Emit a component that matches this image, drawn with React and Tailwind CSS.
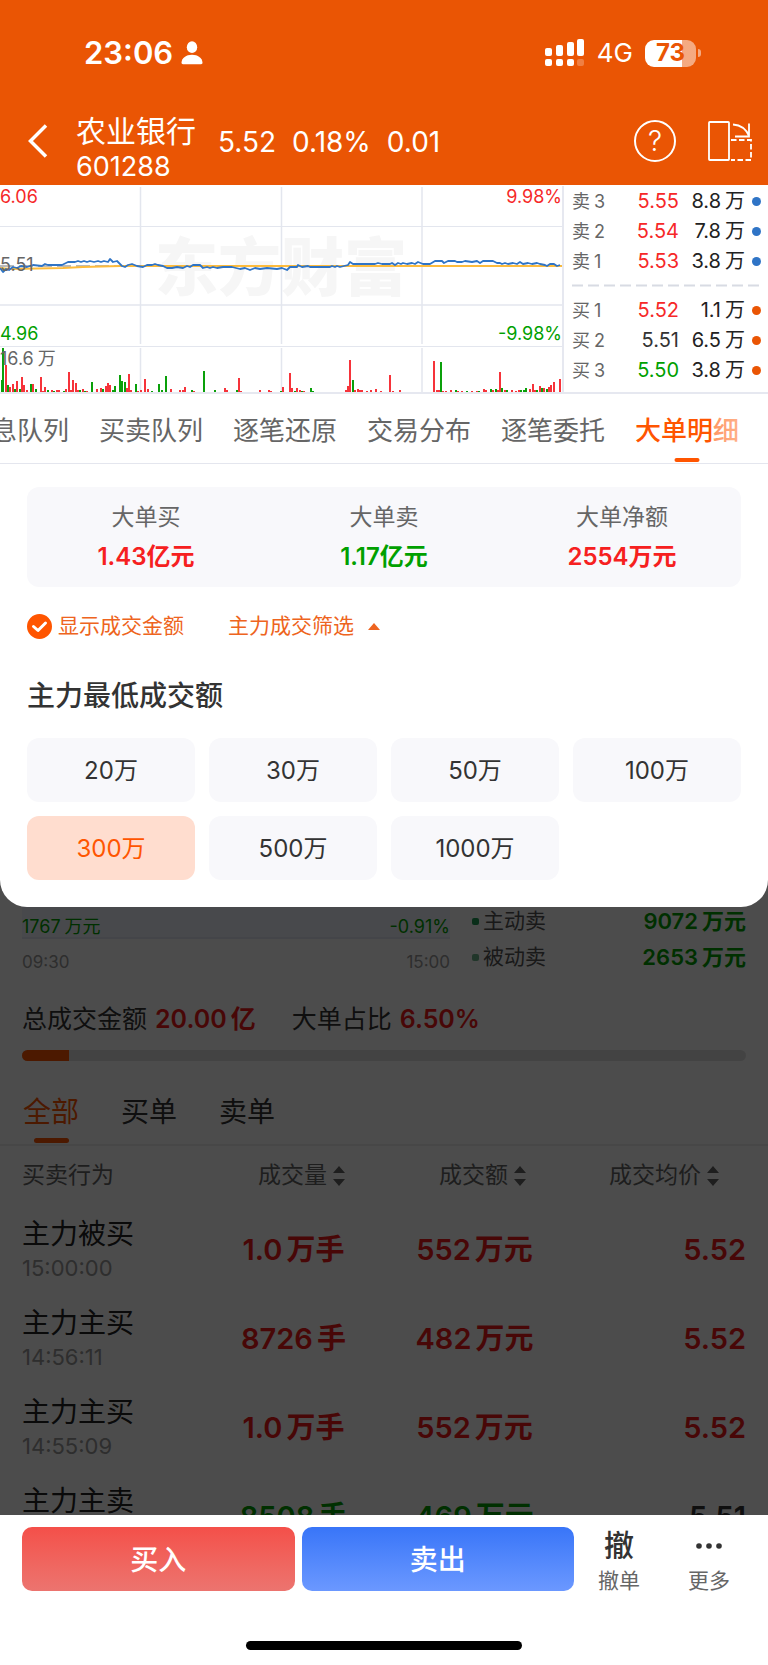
import React, { useState } from 'react';

const sellOrders = [
  { side: '卖', level: 3, price: '5.55', amount: '8.8', color: 'text-[#f62828]' },
  { side: '卖', level: 2, price: '5.54', amount: '7.8', color: 'text-[#f62828]' },
  { side: '卖', level: 1, price: '5.53', amount: '3.8', color: 'text-[#f62828]' },
];

const buyOrders = [
  { side: '买', level: 1, price: '5.52', amount: '1.1', color: 'text-[#f62828]' },
  { side: '买', level: 2, price: '5.51', amount: '6.5', color: 'text-[#333333]' },
  { side: '买', level: 3, price: '5.50', amount: '3.8', color: 'text-[#00a000]' },
];

const tabs = ['息队列', '买卖队列', '逐笔还原', '交易分布', '逐笔委托', '大单明细'];
const amounts = ['20万', '30万', '50万', '100万', '300万', '500万', '1000万'];

const summary = [
  { label: '大单买', value: '1.43亿元', color: 'text-[#f62020]' },
  { label: '大单卖', value: '1.17亿元', color: 'text-[#00a000]' },
  { label: '大单净额', value: '2554万元', color: 'text-[#f62020]' },
];

const trades = [
  { name: '主力被买', time: '15:00:00', vol: '1.0', volUnit: '万手', amt: '552', price: '5.52', color: 'text-[#f01818]', priceColor: 'text-[#f01818]' },
  { name: '主力主买', time: '14:56:11', vol: '8726', volUnit: '手', amt: '482', price: '5.52', color: 'text-[#f01818]', priceColor: 'text-[#f01818]' },
  { name: '主力主买', time: '14:55:09', vol: '1.0', volUnit: '万手', amt: '552', price: '5.52', color: 'text-[#f01818]', priceColor: 'text-[#f01818]' },
  { name: '主力主卖', time: '14:53:27', vol: '8508', volUnit: '手', amt: '469', price: '5.51', color: 'text-[#00a000]', priceColor: 'text-[#333333]' },
];

const priceLine =
  '0,82 3,86 6,83 9,84 13,81 17,82 21,80 27,81 33,79 42,80 45,78 48,79 62,79 68,76 75,76 78,75 81,76 84,75 87,76 90,75 94,76 98,75 101,76 104,75 108,76 110,73 113,76 117,75 122,80 125,81 128,79 132,78 137,80 143,81 147,79 152,79 155,78 158,79 163,80 167,82 172,82 177,81 183,82 187,80 190,81 193,79 200,79 203,82 207,81 210,82 213,81 217,82 223,81 232,81 240,83 245,82 250,84 255,82 260,83 267,82 277,83 282,82 287,84 290,81 297,81 298,79 302,81 308,80 310,81 330,81 332,80 335,81 337,80 340,81 348,79 350,76 353,78 375,78 378,77 382,78 390,78 392,77 395,79 398,77 401,78 403,77 407,78 412,77 415,78 418,76 423,78 430,78 435,75 442,75 444,77 448,75 455,75 457,76 462,76 465,75 472,76 477,75 480,77 483,75 493,75 497,77 500,77 502,78 505,77 508,78 513,77 517,78 520,76 523,78 528,77 532,78 537,77 540,78 545,79 547,80 550,78 554,78 557,80 560,79';

// [x, height, up?]
const volume = [
  [2, 12, 0], [3, 44, 0], [6, 27, 1], [8, 7, 0], [10, 5, 1], [13, 8, 1], [15, 3, 0], [17, 11, 1], [20, 3, 0], [22, 15, 1],
  [24, 7, 1], [27, 2, 1], [31, 8, 0], [33, 8, 1], [36, 3, 0], [41, 15, 1], [43, 1, 1], [45, 5, 1], [48, 2, 0], [52, 2, 1],
  [54, 1, 0], [57, 2, 1], [59, 2, 1], [64, 1, 0], [66, 3, 1], [69, 20, 1], [71, 2, 1], [73, 12, 1], [76, 9, 1], [78, 2, 1],
  [80, 2, 0], [83, 3, 1], [85, 1, 0], [87, 1, 1], [92, 10, 0], [97, 3, 1], [101, 4, 1], [103, 3, 0], [106, 6, 1], [108, 9, 1],
  [110, 7, 1], [113, 2, 0], [115, 6, 0], [120, 17, 0], [122, 11, 0], [125, 10, 0], [127, 4, 1], [129, 18, 1], [131, 2, 1], [136, 8, 0],
  [138, 1, 1], [141, 2, 1], [145, 13, 1], [148, 3, 1], [152, 1, 0], [159, 8, 0], [162, 2, 0], [166, 16, 0], [171, 3, 1], [180, 2, 1],
  [183, 2, 1], [185, 5, 1], [192, 2, 0], [194, 1, 1], [204, 21, 0], [215, 2, 0], [225, 4, 1], [227, 2, 1], [237, 2, 0], [239, 14, 1],
  [241, 1, 1], [260, 2, 1], [269, 2, 1], [271, 1, 1], [281, 1, 0], [283, 5, 1], [290, 19, 1], [292, 4, 1], [295, 1, 0], [297, 4, 1],
  [300, 2, 1], [302, 1, 0], [304, 1, 1], [311, 4, 0], [313, 1, 0], [346, 2, 1], [348, 6, 1], [350, 32, 1], [353, 12, 0], [355, 2, 1],
  [358, 3, 1], [360, 2, 1], [362, 2, 1], [367, 1, 1], [371, 2, 1], [376, 3, 1], [381, 1, 1], [390, 17, 1], [393, 1, 1], [400, 2, 1],
  [434, 31, 1], [437, 2, 1], [439, 2, 1], [441, 30, 0], [443, 1, 1], [446, 1, 1], [451, 2, 1], [456, 2, 0], [458, 1, 1], [462, 1, 1],
  [467, 1, 0], [472, 1, 1], [477, 1, 1], [479, 1, 0], [484, 3, 1], [486, 2, 1], [491, 3, 0], [493, 2, 1], [496, 3, 0], [498, 2, 1],
  [500, 20, 1], [502, 4, 0], [505, 2, 1], [507, 2, 0], [512, 2, 1], [516, 1, 1], [519, 2, 1], [521, 2, 0], [524, 2, 0], [526, 4, 0],
  [530, 3, 1], [533, 8, 1], [535, 2, 1], [537, 2, 0], [540, 6, 1], [542, 4, 0], [544, 4, 1], [547, 3, 0], [549, 5, 1], [551, 7, 1],
  [554, 10, 1], [560, 13, 1],
];

// number followed by its unit, with a narrow gap between them
const Amount = ({ value, unit }) => (
  <>
    {value}
    <span className="ml-1">{unit}</span>
  </>
);

const StatusBar = () => (
  <div className="flex h-8 items-center justify-between pl-[84px] pr-[67px]">
    <div className="flex items-center gap-2">
      <span className="text-[31px] leading-8 font-semibold">23:06</span>
      <svg width="22" height="24" viewBox="0 0 22 24" fill="currentColor">
        <ellipse cx="11" cy="6.2" rx="5.2" ry="5.9" />
        <path d="M0.5 21.5C1 17 5 13.8 11 13.8S21 17 21.5 21.5C21.5 22.7 21 23.2 20 23.2H2C1 23.2 0.5 22.7 0.5 21.5Z" />
      </svg>
    </div>
    <div className="flex items-center">
      <svg width="40" height="28" viewBox="0 0 40 28" fill="currentColor">
        <rect x="0" y="9" width="7" height="8" rx="2" />
        <rect x="11" y="6" width="7" height="11" rx="2" />
        <rect x="22" y="3" width="7" height="14" rx="2" />
        <rect x="32" y="0" width="7" height="17" rx="2" />
        <rect x="0" y="20" width="7" height="7" rx="2" />
        <rect x="11" y="20" width="7" height="7" rx="2" />
        <rect x="22" y="20" width="7" height="7" rx="2" />
        <rect x="32" y="20" width="7" height="7" rx="2" opacity="0.25" />
      </svg>
      <span className="ml-3 text-[26px] leading-8">4G</span>
      <span className="ml-3 flex h-[27px] w-[51px] items-center justify-center rounded-[9px] bg-linear-to-r from-white from-73% to-white/50 to-73% text-[24px] leading-none font-bold text-[#ea5504]">
        73
      </span>
      <span className="ml-[2px] h-2 w-[3px] rounded-r-full bg-white/50"></span>
    </div>
  </div>
);

const NavBar = () => (
  <div className="mt-7 flex h-[88px] items-center pr-4 pl-7">
    <button type="button" aria-label="返回">
      <svg width="20" height="34" viewBox="0 0 20 34" fill="none" stroke="currentColor" strokeWidth="3.5">
        <path d="M18 1.5L2.5 17L18 32.5" />
      </svg>
    </button>
    <div className="ml-7 self-end">
      <h1 className="text-[30px] leading-9">农业银行</h1>
      <p className="text-[27px] leading-9">601288</p>
    </div>
    <div className="ml-[22px] flex flex-1 gap-4 pt-[2px] text-[28px] leading-9">
      <span>5.52</span>
      <span>0.18%</span>
      <span>0.01</span>
    </div>
    <button type="button" aria-label="帮助" className="flex size-[42px] items-center justify-center rounded-full border-2 border-white text-[28px] leading-none font-light">
      ?
    </button>
    <button type="button" aria-label="横屏" className="ml-8">
      <svg width="44" height="40" viewBox="0 0 44 40" fill="none" stroke="currentColor" strokeWidth="1.8">
        <rect x="1" y="1" width="20" height="38" rx="0.8" />
        <path d="M25 3.5C32 4 38 7.5 41 15M41 2.5V15.5H27" />
        <path d="M23 19H43V39H23" strokeDasharray="5.5 2.5" />
      </svg>
    </button>
  </div>
);

const PriceChart = () => (
  <div className="relative min-w-0 flex-1 border-r-2 border-[#e6e8f0] text-[18px] leading-5">
    <div className="absolute inset-x-0 top-[41px] text-center text-[63px] leading-[80px] font-black text-[#f6f6f6]">东方财富</div>
    <svg className="relative block h-[206px] w-full" viewBox="0 0 562 206" preserveAspectRatio="none" fill="none">
      <path d="M0 40.5H562M0 160.5H562" stroke="#e3e6ee" />
      <path d="M0 119H562" stroke="#eaecf2" strokeWidth="2" />
      <path d="M140.5 1V158M140.5 162V206M281.5 1V158M281.5 162V206M422 1V158M422 162V206" stroke="#e3e6ee" strokeWidth="1.5" />
      <path d="M0 80H562" stroke="#777777" strokeDasharray="14 5" />
      <path d="M0 82L10 83L63 82L83 81L120 80L240 80L562 80" stroke="#fdbb3c" strokeWidth="2" />
      <polyline points={priceLine} stroke="#2f74c6" strokeWidth="1.8" strokeLinejoin="round" />
      {volume.map(([x, h, up]) => (
        <rect key={x} x={x - 1} y={206 - h} width="2" height={h} fill={up ? '#f6333a' : '#0aa00a'} />
      ))}
    </svg>
    <span className="absolute top-px left-0 text-[#f62828]">6.06</span>
    <span className="absolute top-px right-0 text-[#f62828]">9.98%</span>
    <span className="absolute top-[69px] left-0 text-[#666666]">5.51</span>
    <span className="absolute top-[138px] left-0 text-[#00a000]">4.96</span>
    <span className="absolute top-[138px] right-0 text-[#00a000]">-9.98%</span>
    <span className="absolute top-[163px] left-0 text-[#666666]"><Amount value="16.6" unit="万" /></span>
  </div>
);

const OrderRow = ({ order, dot }) => (
  <div className="flex h-[30px] items-center text-[20px] whitespace-nowrap">
    <span className="text-[18px] text-[#666666]"><Amount value={order.side} unit={order.level} /></span>
    <span className={`flex-1 text-right ${order.color}`}>{order.price}</span>
    <span className="w-[66px] text-right text-[#222222]"><Amount value={order.amount} unit="万" /></span>
    <span className={`ml-[7px] size-[9px] rounded-full ${dot}`}></span>
  </div>
);

const SortIcon = () => (
  <svg width="12" height="20" viewBox="0 0 12 20" fill="#666666">
    <path d="M6 0L12 7H0ZM6 20L12 13H0Z" />
  </svg>
);

const FilterPanel = () => {
  const [showAmount, setShowAmount] = useState(true);
  const [selected, setSelected] = useState('300万');

  return (
    <section className="relative z-20 rounded-b-[27px] bg-white px-[27px] pt-[23px] pb-[27px]">
      <dl className="grid h-[100px] grid-cols-3 rounded-xl bg-[#f8f8fb] pt-[10px] text-center">
        {summary.map((item) => (
          <div key={item.label}>
            <dt className="text-[23px] leading-10 text-[#666666]">{item.label}</dt>
            <dd className={`text-[24px] leading-10 font-semibold ${item.color}`}>{item.value}</dd>
          </div>
        ))}
      </dl>

      <div className="mt-6 flex h-[30px] items-center text-[21px] text-[#ee6420]">
        <label className="flex items-center gap-[6px]">
          <span className="relative flex">
            <input
              type="checkbox"
              checked={showAmount}
              onChange={(e) => setShowAmount(e.target.checked)}
              className="size-[25px] appearance-none rounded-full border-2 border-[#ff5500] checked:bg-[#ff5500]"
            />
            <svg className="pointer-events-none absolute inset-0" width="25" height="25" viewBox="0 0 25 25" fill="none" stroke="white" strokeWidth="3" strokeLinecap="round" strokeLinejoin="round">
              <path d="M6.5 12.5L11 16.5L18.5 9" />
            </svg>
          </span>
          显示成交金额
        </label>
        <button type="button" className="ml-11 flex items-center gap-[14px]">
          主力成交筛选
          <svg width="12" height="7" viewBox="0 0 12 7" fill="currentColor">
            <path d="M6 0L12 7H0Z" />
          </svg>
        </button>
      </div>

      <h2 className="mt-[35px] text-[28px] leading-10 font-medium text-[#333333]">主力最低成交额</h2>
      <div className="mt-[22px] grid grid-cols-4 gap-[14px]">
        {amounts.map((amount) => (
          <button
            key={amount}
            type="button"
            onClick={() => setSelected(amount)}
            className={`h-16 rounded-xl pt-[2px] text-[24px] ${
              selected === amount ? 'bg-[#ffddcf] text-[#ff5500]' : 'bg-[#f8f8fb] text-[#333333]'
            }`}
          >
            {amount}
          </button>
        ))}
      </div>
    </section>
  );
};

const FundFlow = () => (
  <div className="flex px-[22px]">
    <div className="w-[428px]">
      <div className="flex h-[60px] items-end justify-between border-b-2 border-[#e4e8f6] bg-[#f2f5ff] text-[18px] leading-5 text-[#00a000]">
        <span><Amount value="1767" unit="万元" /></span>
        <span>-0.91%</span>
      </div>
      <div className="mt-[11px] flex justify-between text-[17px] leading-6 text-[#999999]">
        <span>09:30</span>
        <span>15:00</span>
      </div>
    </div>
    <div className="ml-[22px] flex-1 pt-6 text-[21px] leading-9">
      <div className="flex items-center">
        <span className="mr-1 size-[7px] rounded-[2px] bg-[#1f9a55]"></span>
        <span className="text-[#555555]">主动卖</span>
        <span className="ml-auto text-[22px] font-semibold text-[#00a000]"><Amount value="9072" unit="万元" /></span>
      </div>
      <div className="flex items-center">
        <span className="mr-1 size-[7px] rounded-[2px] bg-[#70b48c]"></span>
        <span className="text-[#555555]">被动卖</span>
        <span className="ml-auto text-[22px] font-semibold text-[#00a000]"><Amount value="2653" unit="万元" /></span>
      </div>
    </div>
  </div>
);

const TradeList = () => {
  const [filter, setFilter] = useState('全部');

  return (
    <section className="relative -mt-7 min-h-0 flex-1 overflow-hidden bg-white">
      <FundFlow />

      <div className="mt-6 flex gap-9 px-[22px] text-[25px] leading-10 text-[#333333]">
        <p>总成交金额<b className="ml-2 font-semibold text-[#f01818]"><Amount value="20.00" unit="亿" /></b></p>
        <p>大单占比<b className="ml-2 font-semibold text-[#f01818]">6.50%</b></p>
      </div>
      <div className="mx-[22px] mt-[11px] h-[11px] overflow-hidden rounded-full bg-[#e2e2e2]">
        <div className="h-full w-[6.5%] bg-[#ff5500]"></div>
      </div>

      <div className="mt-[31px] flex gap-[42px] border-b-2 border-[#eeeeee] px-[23px]">
        {['全部', '买单', '卖单'].map((name) => (
          <button
            key={name}
            type="button"
            onClick={() => setFilter(name)}
            className={`flex flex-col items-center text-[28px] leading-10 ${filter === name ? 'text-[#ff5500]' : 'text-[#333333]'}`}
          >
            {name}
            <span className={`mt-[6px] mb-px h-[5px] w-[35px] rounded-full ${filter === name ? 'bg-[#ff5500]' : ''}`}></span>
          </button>
        ))}
      </div>

      <div className="px-[22px]">
        <table className="w-full table-fixed">
          <thead>
            <tr className="h-[59px] text-[23px] text-[#666666]">
              <th className="text-left font-normal">买卖行为</th>
              <th className="pl-4 font-normal">
                <button type="button" className="inline-flex items-center gap-[6px]">成交量<SortIcon /></button>
              </th>
              <th className="pl-4 font-normal">
                <button type="button" className="inline-flex items-center gap-[6px]">成交额<SortIcon /></button>
              </th>
              <th className="pr-[27px] text-right font-normal">
                <button type="button" className="inline-flex items-center gap-[6px]">成交均价<SortIcon /></button>
              </th>
            </tr>
          </thead>
          <tbody>
            {trades.map((trade) => (
              <tr key={trade.time} className={`h-[89px] text-center text-[29px] font-semibold ${trade.color}`}>
                <td className="text-left font-normal">
                  <div className="text-[28px] leading-9 text-[#222222]">{trade.name}</div>
                  <div className="text-[22px] leading-8 text-[#999999]">{trade.time}</div>
                </td>
                <td><Amount value={trade.vol} unit={trade.volUnit} /></td>
                <td><Amount value={trade.amt} unit="万元" /></td>
                <td className={`text-right ${trade.priceColor}`}>{trade.price}</td>
              </tr>
            ))}
          </tbody>
        </table>
      </div>

      <div className="absolute inset-0 bg-black/70"></div>
    </section>
  );
};

const BottomBar = () => (
  <footer className="h-[150px] bg-white pt-3">
    <div className="flex h-16 pl-[22px]">
      <button type="button" className="flex-1 rounded-[10px] bg-linear-to-b from-[#f44f49] to-[#ec746f] pt-[2px] text-[28px] font-medium text-white">买入</button>
      <button type="button" className="ml-[7px] flex-1 rounded-[10px] bg-linear-to-b from-[#3875f8] to-[#6b98ff] pt-[2px] text-[28px] font-medium text-white">卖出</button>
      <button type="button" className="w-[90px] text-[21px] text-[#666666]">
        <span className="block text-[30px] leading-9 font-medium text-[#333333]">撤</span>
        <span className="block leading-9">撤单</span>
      </button>
      <button type="button" className="mr-[14px] w-[90px] text-[21px] text-[#666666]">
        <svg className="mx-auto block" width="28" height="36" viewBox="0 0 28 36" fill="#333333">
          <circle cx="4" cy="19" r="2.8" />
          <circle cx="14" cy="19" r="2.8" />
          <circle cx="24" cy="19" r="2.8" />
        </svg>
        <span className="block leading-9">更多</span>
      </button>
    </div>
    <div className="mx-auto mt-[50px] h-[9px] w-[36%] rounded-full bg-black"></div>
  </footer>
);

const App = () => {
  const [activeTab, setActiveTab] = useState('大单明细');

  return (
    <div className="flex h-screen flex-col overflow-hidden bg-white font-[Inter,'Noto_Sans_CJK_SC',sans-serif]">
      <header className="bg-[#ea5504] pt-[37px] text-white">
        <StatusBar />
        <NavBar />
      </header>

      <div className="flex border-b-2 border-[#e6e8f0] pt-px">
        <PriceChart />
        <div className="w-[204px] pr-[7px] pl-2">
          {sellOrders.map((order) => (
            <OrderRow key={order.level} order={order} dot="bg-[#2f74c6]" />
          ))}
          <svg className="my-2 block h-[3px] w-full">
            <line x1="0" y1="1.5" x2="188" y2="1.5" stroke="#d8dbe3" strokeWidth="2" strokeDasharray="11 5" />
          </svg>
          {buyOrders.map((order) => (
            <OrderRow key={order.level} order={order} dot="bg-[#ea5504]" />
          ))}
        </div>
      </div>

      <nav className="relative flex h-[70px] gap-[30px] border-b border-[#e4e6ee] pl-[99px]">
        {tabs.map((tab) => (
          <button
            key={tab}
            type="button"
            onClick={() => setActiveTab(tab)}
            className={`relative shrink-0 pt-1 text-[26px] first:-ml-[108px] ${
              activeTab === tab ? 'font-medium text-[#ff5500]' : 'text-[#666666]'
            }`}
          >
            {tab}
            {activeTab === tab && (
              <span className="absolute bottom-px left-1/2 h-1 w-[25px] -translate-x-1/2 rounded-full bg-[#ff5500]"></span>
            )}
          </button>
        ))}
        <div className="pointer-events-none absolute inset-y-0 right-0 w-[54px] bg-linear-to-r from-white/40 to-white/70"></div>
      </nav>

      <FilterPanel />
      <TradeList />
      <BottomBar />
    </div>
  );
};

export default App;
